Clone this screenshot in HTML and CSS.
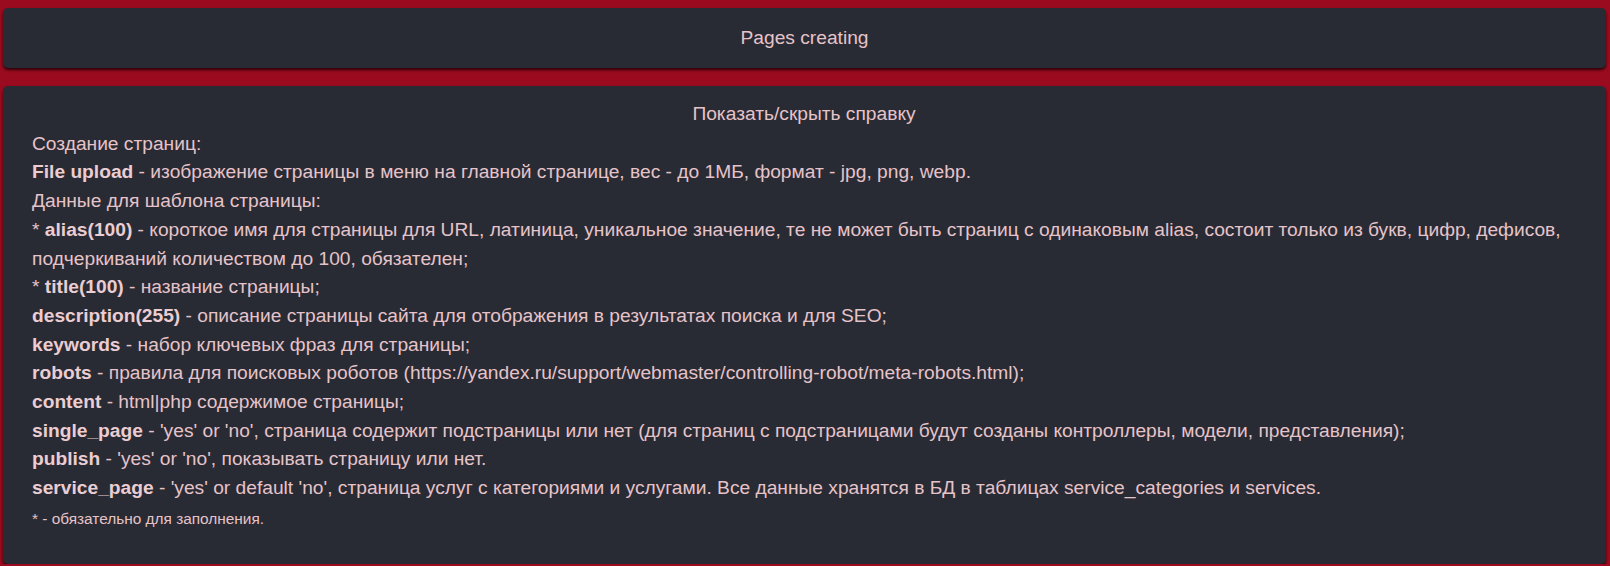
FILE: index.html
```html
<!DOCTYPE html>
<html lang="ru">
<head>
<meta charset="utf-8">
<title>Pages creating</title>
<link rel="stylesheet" href="styles.css">
</head>
<body>
<div class="page">
  <header class="card head">Pages creating</header>
  <section class="card help">
    <div class="help-toggle">Показать/скрыть справку</div>
    <div class="help-body">
      <p>Создание страниц:</p>
      <p><b>File upload</b> - изображение страницы в меню на главной странице, вес - до 1МБ, формат - jpg, png, webp.</p>
      <p>Данные для шаблона страницы:</p>
      <p>* <b>alias(100)</b> - короткое имя для страницы для URL, латиница, уникальное значение, те не может быть страниц с одинаковым alias, состоит только из букв, цифр, дефисов, подчеркиваний количеством до 100, обязателен;</p>
      <p>* <b>title(100)</b> - название страницы;</p>
      <p><b>description(255)</b> - описание страницы сайта для отображения в результатах поиска и для SEO;</p>
      <p><b>keywords</b> - набор ключевых фраз для страницы;</p>
      <p><b>robots</b> - правила для поисковых роботов (https://yandex.ru/support/webmaster/controlling-robot/meta-robots.html);</p>
      <p><b>content</b> - html|php содержимое страницы;</p>
      <p><b>single_page</b> - 'yes' or 'no', страница содержит подстраницы или нет (для страниц с подстраницами будут созданы контроллеры, модели, представления);</p>
      <p><b>publish</b> - 'yes' or 'no', показывать страницу или нет.</p>
      <p><b>service_page</b> - 'yes' or default 'no', страница услуг с категориями и услугами. Все данные хранятся в БД в таблицах service_categories и services.</p>
      <p class="note">* - обязательно для заполнения.</p>
    </div>
  </section>
</div>
</body>
</html>
```

FILE: styles.css
```css
html, body {
  margin: 0;
  padding: 0;
  background: #9b0b1f;
}
body {
  font-family: "Liberation Sans", Arial, sans-serif;
  color: #e6c3c9;
}
.page {
  padding: 8px 4px 0 3px;
  display: flex;
  flex-direction: column;
  gap: 18px;
}
.card {
  background: #282b34;
  border-radius: 5px;
  box-shadow: 0 2px 3px rgba(0, 0, 0, 0.75);
}
.head {
  height: 60px;
  display: flex;
  align-items: center;
  justify-content: center;
  font-size: 19.2px;
}
.help {
  padding: 14px 30px 30px 29px;
  font-size: 19.2px;
  line-height: 28.7px;
  min-height: 432px;
}
.help-toggle {
  text-align: center;
  margin-bottom: 1px;
}
.help-body p {
  margin: 0;
}
.help-body b {
  font-weight: 600;
  color: #ebcdd2;
}
.help-body .note {
  font-size: 15.4px;
  margin-top: 2px;
}
```
